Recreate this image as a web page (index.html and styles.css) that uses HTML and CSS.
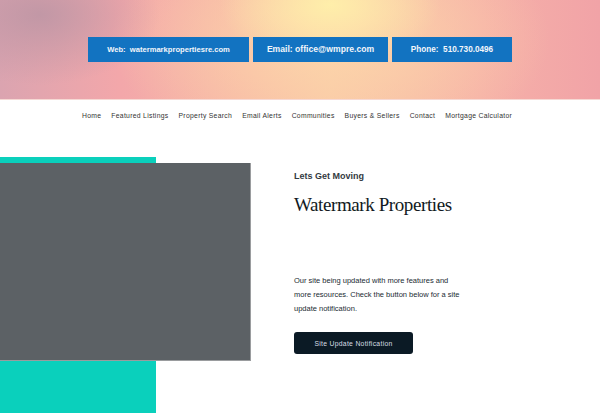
FILE: index.html
```html
<!DOCTYPE html>
<html>
<head>
<meta charset="utf-8">
<link rel="stylesheet" href="styles.css">
</head>
<body>
<header class="top">
  <a class="contact-btn web">Web:&nbsp; watermarkpropertiesre.com</a>
  <a class="contact-btn email">Email: office@wmpre.com</a>
  <a class="contact-btn phone">Phone:&nbsp; 510.730.0496</a>
</header>
<nav class="nav">
  <a>Home</a>
  <a>Featured Listings</a>
  <a>Property Search</a>
  <a>Email Alerts</a>
  <a>Communities</a>
  <a>Buyers &amp; Sellers</a>
  <a>Contact</a>
  <a>Mortgage Calculator</a>
</nav>
<main class="hero">
  <div class="media">
    <div class="teal">
      <div class="photo"></div>
    </div>
  </div>
  <div class="copy">
    <h3 class="kicker">Lets Get Moving</h3>
    <h1 class="title">Watermark Properties</h1>
    <p class="text">Our site being updated with more features and more resources. Check the button below for a site update notification.</p>
    <a class="cta">Site Update Notification</a>
  </div>
</main>
</body>
</html>
```
FILE: styles.css
```css
* { box-sizing: border-box; }
html, body { margin: 0; padding: 0; }
body {
  width: 600px;
  height: 413px;
  overflow: hidden;
  background: #fff;
  font-family: "Liberation Sans", Arial, sans-serif;
}
.top {
  height: 100px;
  display: flex;
  justify-content: center;
  align-items: center;
  gap: 4px;
  padding-bottom: 1px;
  border-bottom: 1px solid #f6d9d4;
  background:
    radial-gradient(ellipse 110px 60px at 330px 5px, rgba(255,240,170,0.95), rgba(255,240,170,0) 100%),
    radial-gradient(ellipse 120px 70px at 40px 15px, rgba(190,150,165,0.9), rgba(190,150,165,0) 100%),
    radial-gradient(ellipse 220px 120px at 330px 40px, rgba(253,215,170,0.9), rgba(253,215,170,0) 100%),
    linear-gradient(90deg, #dba4b0 0%, #f3a7aa 20%, #f7b7a6 40%, #f8c6a6 55%, #f6b1a8 80%, #f1a3a7 100%);
}
.contact-btn {
  height: 25px;
  display: flex;
  align-items: center;
  justify-content: center;
  background: #1273c1;
  color: #f2f6fb;
  font-weight: bold;
}
.web { width: 161px; font-size: 7.6px; }
.email { width: 135px; font-size: 8.6px; }
.phone { width: 120px; font-size: 8.2px; }
.nav {
  height: 31px;
  display: flex;
  justify-content: center;
  align-items: center;
  gap: 10px;
  font-size: 6.8px;
  color: #333;
  letter-spacing: 0.3px;
  padding-right: 6px;
}
.hero {
  display: flex;
  padding-top: 26px;
}
.media {
  width: 294px;
  flex: none;
}
.teal {
  width: 156px;
  height: 256px;
  background: #0ad0bc;
  padding-top: 6px;
}
.photo {
  width: 251px;
  height: 198px;
  background: #5c6165;
  border-right: 1px solid #9a9c9e;
  border-bottom: 1px solid #9a9c9e;
}
.copy {
  width: 166px;
  padding-top: 14px;
}
.kicker {
  margin: 0;
  font-size: 9px;
  font-weight: bold;
  color: #333a3f;
  line-height: 11px;
}
.title {
  margin: 12px 0 0;
  font-family: "Liberation Serif", "Times New Roman", serif;
  font-weight: normal;
  font-size: 19px;
  letter-spacing: -0.4px;
  line-height: 22px;
  color: #111a22;
}
.text {
  margin: 58px 0 0;
  font-size: 7.5px;
  line-height: 14px;
  color: #222b33;
}
.cta {
  display: flex;
  align-items: center;
  justify-content: center;
  margin-top: 16px;
  width: 119px;
  height: 22px;
  border-radius: 3px;
  background: #0b1a25;
  color: #d7dde3;
  font-size: 6.8px;
  letter-spacing: 0.3px;
}
```
